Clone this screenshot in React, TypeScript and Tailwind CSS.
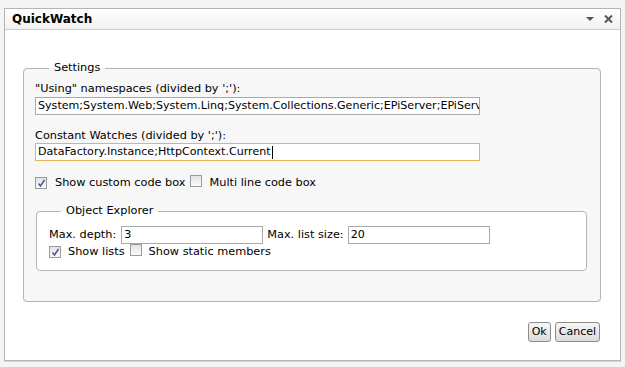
import React from 'react';

const font = { fontFamily: '"DejaVu Sans", Verdana, sans-serif' };

function CheckBox({ checked = false }: { checked?: boolean }) {
  return (
    <span className="inline-flex h-[12px] w-[12px] shrink-0 items-center justify-center border border-[#9a9a9a] bg-gradient-to-b from-[#e4e4e4] to-[#fbfbfb]">
      {checked && (
        <svg width="9" height="9" viewBox="0 0 9 9">
          <path d="M1.5 4.5 L3.5 7 L7.5 1" fill="none" stroke="#4d5d98" strokeWidth="1.6" />
        </svg>
      )}
    </span>
  );
}

function TextBox({ value, className = '', focused = false }: { value: string; className?: string; focused?: boolean }) {
  return (
    <div
      className={`flex h-[18px] items-center overflow-hidden whitespace-nowrap bg-white pl-[2px] text-[11.1px] text-black ${
        focused ? 'border border-[#e3b559]' : 'border border-[#a9a9a9]'
      } ${className}`}
    >
      <span>{value}</span>
      {focused && <span className="ml-[1px] h-[13px] w-px bg-black" />}
    </div>
  );
}

export default function App() {
  return (
    <div className="h-[367px] w-[625px] bg-[#f4f4f4] pl-[4px] pt-[8px]" style={font}>
      <div className="flex h-[353px] w-[617px] flex-col border border-[#b4b4b4] bg-white shadow-[0_1px_0_#d6d6d6]">
        {/* Title bar */}
        <div className="flex h-[21px] items-center justify-between border-b border-[#cfcfcf] bg-gradient-to-b from-white to-[#f1f1f1] pl-[7px] pr-[7px]">
          <span className="text-[12px] font-bold text-black">QuickWatch</span>
          <div className="flex items-center gap-[10px]">
            <svg width="8" height="4" viewBox="0 0 8 4">
              <path d="M0 0 H8 L4 4 Z" fill="#555" />
            </svg>
            <svg width="9" height="8" viewBox="0 0 9 8">
              <path d="M1 0.5 L8 7.5 M8 0.5 L1 7.5" stroke="#555" strokeWidth="2" />
            </svg>
          </div>
        </div>

        {/* Content */}
        <div className="flex flex-1 flex-col pl-[18px] pr-[19px] pt-[31px] text-[11.3px] leading-[14px]">
          <fieldset className="h-[241px] rounded-[4px] border border-[#b4b4b4] bg-[#f7f7f7] pl-[11px] pr-[11px] text-black">
            <legend className="ml-[14px] px-[5px]">Settings</legend>
            <div className="pt-[7px]">"Using" namespaces (divided by ';'):</div>
            <TextBox
              className="mt-[1px] w-[445px]"
              value="System;System.Web;System.Linq;System.Collections.Generic;EPiServer;EPiServ"
            />
            <div className="mt-[14px]">Constant Watches (divided by ';'):</div>
            <TextBox className="w-[445px]" value="DataFactory.Instance;HttpContext.Current" focused />

            <div className="mt-[14px] flex items-center">
              <CheckBox checked />
              <span className="ml-[8px]">Show custom code box</span>
              <span className="ml-[4px]">
                <CheckBox />
              </span>
              <span className="ml-[8px]">Multi line code box</span>
            </div>

            <fieldset className="mt-[13px] ml-[1px] w-[551px] rounded-[4px] border border-[#b4b4b4] bg-white pb-[10px] pl-[12px]">
              <legend className="ml-[12px] px-[5px]">Object Explorer</legend>
              <div className="mt-[8px] flex items-center">
                <span>Max. depth:</span>
                <TextBox className="ml-[5px] w-[142px]" value="3" />
                <span className="ml-[4px]">Max. list size:</span>
                <TextBox className="ml-[4px] w-[142px]" value="20" />
              </div>
              <div className="flex items-center">
                <CheckBox checked />
                <span className="ml-[7px]">Show lists</span>
                <span className="ml-[5px]">
                  <CheckBox />
                </span>
                <span className="ml-[7px]">Show static members</span>
              </div>
            </fieldset>
          </fieldset>

          <div className="mt-[20px] flex justify-end gap-[4px] pr-[1px] text-[11px]">
            <button className="h-[20px] rounded-[3px] border border-[#8c8c8c] bg-gradient-to-b from-[#f6f6f6] to-[#dcdcdc] px-[3px] text-black">
              Ok
            </button>
            <button className="h-[20px] rounded-[3px] border border-[#8c8c8c] bg-gradient-to-b from-[#f6f6f6] to-[#dcdcdc] px-[3px] text-black">
              Cancel
            </button>
          </div>
        </div>
      </div>
    </div>
  );
}
